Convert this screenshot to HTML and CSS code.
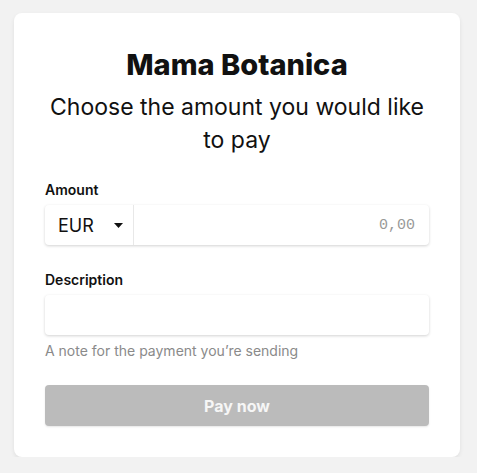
FILE: index.html
```html
<!DOCTYPE html>
<html lang="en">
<head>
  <meta charset="UTF-8" />
  <title>Pay - Mama Botanica</title>
  <link rel="stylesheet" href="styles.css">
</head>
<body>
  <main class="pay-card">
    <h1 class="shop-name">Mama Botanica</h1>
    <p class="intro">Choose the amount you would like to pay</p>

    <form class="pay-form">
      <label class="field-label">Amount</label>
      <div class="amount-group">
        <div class="currency">
          <span>EUR</span>
          <svg width="9" height="5" viewBox="0 0 9 5"><path d="M0 0h9L4.5 5z" fill="#111"/></svg>
        </div>
        <div class="amount-input">0,00</div>
      </div>

      <label class="field-label desc-label">Description</label>
      <div class="text-input"></div>
      <p class="hint">A note for the payment you’re sending</p>

      <button type="button" class="pay-btn" disabled>Pay now</button>
    </form>
  </main>
</body>
</html>
```

FILE: styles.css
```css
body {
  margin: 0;
  font-family: Inter, "Noto Sans", Arial, sans-serif;
  background: #f2f2f2;
  color: #111;
}

.pay-card {
  width: 384px;
  margin: 13px 0 0 14px;
  padding: 34px 31px 31px;
  background: white;
  border-radius: 8px;
  box-shadow: 0 2px 4px rgba(0, 0, 0, 0.08);
}

.shop-name {
  margin: 0;
  text-align: center;
  font-size: 29px;
  font-weight: 800;
  line-height: 36px;
}

.intro {
  margin: 8px 0 0;
  text-align: center;
  font-size: 23px;
  line-height: 33px;
  font-weight: 400;
}

.pay-form {
  margin-top: 24px;
  display: flex;
  flex-direction: column;
}

.field-label {
  font-size: 14px;
  font-weight: 600;
  line-height: 18px;
  margin-bottom: 6px;
}

.desc-label {
  margin-top: 26px;
}

.amount-group {
  display: flex;
  height: 40px;
  border-radius: 4px;
  box-shadow: 0 1px 3px rgba(0, 0, 0, 0.18);
}

.currency {
  width: 89px;
  display: flex;
  align-items: center;
  justify-content: space-between;
  padding: 0 10px 0 13px;
  box-sizing: border-box;
  border-right: 1px solid #e8e8e8;
  font-size: 18px;
}

.amount-input {
  flex: 1;
  display: flex;
  align-items: center;
  justify-content: flex-end;
  padding-right: 14px;
  font-family: "Liberation Mono", monospace;
  font-size: 15px;
  color: #999;
}

.text-input {
  height: 40px;
  border-radius: 4px;
  box-shadow: 0 1px 3px rgba(0, 0, 0, 0.18);
}

.hint {
  margin: 7px 0 0;
  font-size: 14px;
  color: #8a8a8a;
  line-height: 18px;
}

.pay-btn {
  margin-top: 25px;
  height: 41px;
  border: none;
  border-radius: 4px;
  background: #bbbbbb;
  color: #f6f6f6;
  font-family: inherit;
  font-size: 16px;
  font-weight: 700;
  box-shadow: 0 1px 2px rgba(0, 0, 0, 0.1);
}
```
